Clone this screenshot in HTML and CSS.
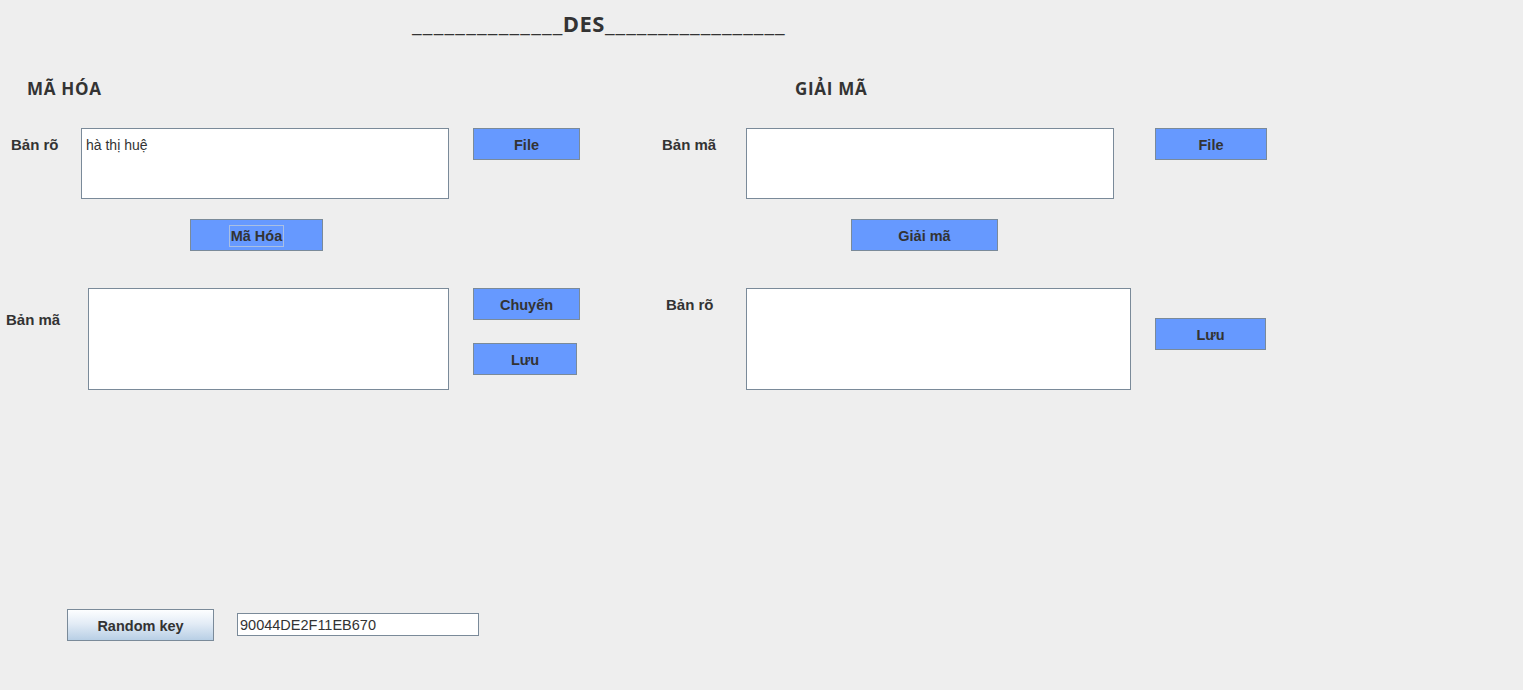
FILE: index.html
```html
<!DOCTYPE html>
<html lang="vi">
<head>
<meta charset="utf-8">
<title>DES</title>
<link rel="stylesheet" href="styles.css">
</head>
<body>
<div class="app">
  <h1 class="title"><span class="rule rule-left">______________</span><span class="des">DES</span><span class="rule rule-right">_________________</span></h1>
  <div class="panels">
    <section class="panel panel-enc">
      <h2 class="heading heading-enc">MÃ HÓA</h2>
      <div class="row row-top">
        <label class="lbl lbl-enc-top">Bản rõ</label>
        <div class="area area-enc-top">hà thị huệ</div>
        <button class="btn btn-file-enc">File</button>
      </div>
      <div class="action action-enc">
        <button class="btn btn-enc"><span class="focus">Mã Hóa</span></button>
      </div>
      <div class="row row-bottom">
        <label class="lbl lbl-enc-bottom">Bản mã</label>
        <div class="area area-enc-bottom"></div>
        <div class="btn-col">
          <button class="btn btn-move">Chuyển</button>
          <button class="btn btn-save-enc">Lưu</button>
        </div>
      </div>
    </section>
    <section class="panel panel-dec">
      <h2 class="heading heading-dec">GIẢI MÃ</h2>
      <div class="row row-top">
        <label class="lbl lbl-dec-top">Bản mã</label>
        <div class="area area-dec-top"></div>
        <button class="btn btn-file-dec">File</button>
      </div>
      <div class="action action-dec">
        <button class="btn btn-dec">Giải mã</button>
      </div>
      <div class="row row-bottom">
        <label class="lbl lbl-dec-bottom">Bản rõ</label>
        <div class="area area-dec-bottom"></div>
        <button class="btn btn-save-dec">Lưu</button>
      </div>
    </section>
  </div>
  <div class="keybar">
    <button class="btn-key">Random key</button>
    <div class="keyfield">90044DE2F11EB670</div>
  </div>
</div>
</body>
</html>
```

FILE: styles.css
```css
* { box-sizing: border-box; }
html, body { margin: 0; padding: 0; }
body {
  background: #eeeeee;
  color: #333333;
  font-family: "Liberation Sans", Arial, sans-serif;
  width: 1523px;
  height: 690px;
  overflow: hidden;
}
.app { display: flex; flex-direction: column; }

.title {
  margin: 0 0 0 412px;
  padding-top: 8px;
  font-family: "Open Sans", sans-serif;
  font-weight: 700;
  font-size: 22px;
  line-height: 30px;
  color: #333333;
  white-space: nowrap;
}
.rule { font-weight: 400; }
.rule-left { letter-spacing: 1.2px; }
.rule-right { letter-spacing: 1.0px; }
.des { letter-spacing: 0.5px; margin-left: -1px; }

.panels { display: flex; margin-top: 40px; }
.panel { display: flex; flex-direction: column; }
.panel-enc { width: 640px; }
.panel-dec { flex: 1; }

.heading {
  margin: 0;
  font-family: "Open Sans", sans-serif;
  font-weight: 700;
  font-size: 17px;
  line-height: 22px;
  letter-spacing: 0.7px;
  color: #333333;
}
.heading-enc { padding-left: 27px; }
.heading-dec { padding-left: 155px; }

.row { display: flex; align-items: flex-start; }
.row-top { margin-top: 28px; }
.row-bottom { margin-top: 37px; }

.lbl {
  flex: none;
  font-weight: 700;
  font-size: 15px;
  line-height: 33px;
  color: #333333;
  white-space: nowrap;
}
.lbl-enc-top { width: 81px; padding-left: 11px; }
.lbl-enc-bottom { width: 88px; padding-left: 6px; margin-top: 15px; }
.lbl-dec-top { width: 106px; padding-left: 22px; }
.lbl-dec-bottom { width: 106px; padding-left: 26px; }

.area {
  flex: none;
  background: #ffffff;
  border: 1px solid #7a8a99;
  font-size: 14px;
  line-height: 17px;
  padding: 8px 4px;
  color: #333333;
}
.area-enc-top { width: 368px; height: 71px; }
.area-enc-bottom { width: 361px; height: 102px; }
.area-dec-top { width: 368px; height: 71px; }
.area-dec-bottom { width: 385px; height: 102px; }

.btn {
  flex: none;
  display: flex;
  align-items: center;
  justify-content: center;
  height: 32px;
  padding: 1px 0 0;
  background: #6699ff;
  border: 1px solid #7a8a99;
  font-family: "Liberation Sans", Arial, sans-serif;
  font-weight: 700;
  font-size: 14.5px;
  color: #333333;
}
.btn-file-enc { width: 107px; margin-left: 24px; }
.btn-file-dec { width: 112px; margin-left: 41px; }
.btn-move { width: 107px; }
.btn-save-enc { width: 104px; margin-top: 23px; }
.btn-save-dec { width: 111px; margin-left: 24px; margin-top: 30px; }

.btn-col { display: flex; flex-direction: column; margin-left: 24px; }

.action { display: flex; margin-top: 20px; }
.action-enc { padding-left: 190px; }
.action-dec { padding-left: 211px; }
.btn-enc { width: 133px; }
.btn-dec { width: 147px; }

.focus {
  display: inline-flex;
  align-items: center;
  height: 22px;
  padding: 0 1px;
  border: 1px solid #a9bfe3;
}

.keybar {
  display: flex;
  align-items: flex-start;
  margin-top: 219px;
  padding-left: 67px;
}
.btn-key {
  width: 147px;
  height: 32px;
  border: 1px solid #7a8a99;
  background: linear-gradient(#fdfeff, #e3ecf6 45%, #b8cfe5);
  font-family: "Liberation Sans", Arial, sans-serif;
  font-weight: 700;
  font-size: 14.5px;
  color: #333333;
  padding: 2px 0 0;
}
.keyfield {
  width: 242px;
  height: 23px;
  margin-left: 23px;
  margin-top: 4px;
  background: #ffffff;
  border: 1px solid #7a8a99;
  font-size: 14.5px;
  line-height: 21px;
  padding: 1px 2px 0;
  color: #333333;
}
```
